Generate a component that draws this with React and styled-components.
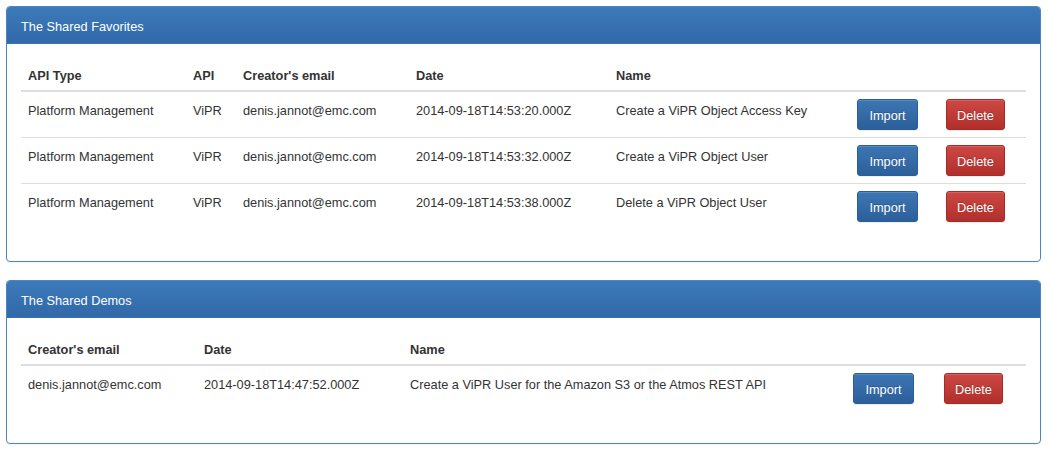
import React from "react";
import styled, { createGlobalStyle } from "styled-components";

const Global = createGlobalStyle`
  html, body { margin: 0; padding: 0; background: #fff; }
  body {
    font-family: "Liberation Sans", Arial, Helvetica, sans-serif;
    font-size: 12.75px;
    color: #333;
  }
`;

const Page = styled.div`
  padding: 6px 9px 6px 6px;
  display: flex;
  flex-direction: column;
  gap: 18px;
`;

const Panel = styled.section`
  border: 1px solid #4a86c4;
  border-radius: 4px;
  background: #fff;
  box-shadow: 0 1px 2px rgba(0, 0, 0, 0.05);
  overflow: hidden;
`;

const PanelHeading = styled.div`
  height: 38px;
  box-sizing: border-box;
  display: flex;
  align-items: center;
  padding: 3px 14px 0;
  color: #fff;
  font-size: 12.75px;
  background: linear-gradient(to bottom, #3d7bbb 0%, #3168a8 100%);
  border-bottom: 1px solid #3a72b0;
  margin-top: -1px;
  margin-left: -1px;
  margin-right: -1px;
  border-left: 1px solid #3a76b6;
  border-right: 1px solid #3a76b6;
`;

const PanelBody = styled.div`
  padding: 14px;
`;

const Table = styled.table`
  width: 100%;
  table-layout: fixed;
  border-collapse: collapse;
  margin-bottom: 18px;
`;

const Col = styled.col`
  width: ${(p) => p.$w}px;
`;

const Th = styled.th`
  text-align: left;
  font-weight: bold;
  padding: 9px 7px 5px;
  line-height: 18px;
  border-bottom: 2px solid #dddddd;
  white-space: nowrap;
`;

const Td = styled.td`
  padding: 9px 7px 5px;
  line-height: 20px;
  vertical-align: top;
  border-top: 1px solid #dddddd;
  white-space: nowrap;
`;

const ButtonCell = styled(Td)`
  padding: 7px 7px 7px;
`;

const Button = styled.button`
  display: block;
  height: 31px;
  padding: 2px 10px 0;
  font-family: inherit;
  font-size: 12.75px;
  color: #fff;
  border-radius: 3px;
  border: 1px solid ${(p) => (p.$variant === "danger" ? "#a52b28" : "#285f96")};
  background: ${(p) =>
    p.$variant === "danger"
      ? "linear-gradient(to bottom, #cd4844 0%, #b12f2b 100%)"
      : "linear-gradient(to bottom, #3c76b4 0%, #2c5f9a 100%)"};
  text-shadow: 0 -1px 0 rgba(0, 0, 0, 0.2);
  box-shadow: inset 0 1px 0 rgba(255, 255, 255, 0.15), 0 1px 1px rgba(0, 0, 0, 0.075);
  width: ${(p) => p.$w}px;
  cursor: pointer;
`;

const favorites = [
  ["Platform Management", "ViPR", "denis.jannot@emc.com", "2014-09-18T14:53:20.000Z", "Create a ViPR Object Access Key"],
  ["Platform Management", "ViPR", "denis.jannot@emc.com", "2014-09-18T14:53:32.000Z", "Create a ViPR Object User"],
  ["Platform Management", "ViPR", "denis.jannot@emc.com", "2014-09-18T14:53:38.000Z", "Delete a ViPR Object User"],
];

const demos = [
  ["denis.jannot@emc.com", "2014-09-18T14:47:52.000Z", "Create a ViPR User for the Amazon S3 or the Atmos REST API"],
];

function DataPanel({ title, headers, widths, rows }) {
  return (
    <Panel>
      <PanelHeading>{title}</PanelHeading>
      <PanelBody>
        <Table>
          <colgroup>
            {widths.map((w, i) => (
              <Col key={i} $w={w} />
            ))}
          </colgroup>
          <thead>
            <tr>
              {headers.map((h, i) => (
                <Th key={i}>{h}</Th>
              ))}
              <Th />
              <Th />
            </tr>
          </thead>
          <tbody>
            {rows.map((r, i) => (
              <tr key={i}>
                {r.map((c, j) => (
                  <Td key={j}>{c}</Td>
                ))}
                <ButtonCell>
                  <Button $w={61}>Import</Button>
                </ButtonCell>
                <ButtonCell>
                  <Button $variant="danger" $w={59}>Delete</Button>
                </ButtonCell>
              </tr>
            ))}
          </tbody>
        </Table>
      </PanelBody>
    </Panel>
  );
}

export default function App() {
  return (
    <>
      <Global />
      <Page>
        <DataPanel
          title="The Shared Favorites"
          headers={["API Type", "API", "Creator's email", "Date", "Name"]}
          widths={[165, 50, 173, 200, 241, 89, 87]}
          rows={favorites}
        />
        <DataPanel
          title="The Shared Demos"
          headers={["Creator's email", "Date", "Name"]}
          widths={[176, 206, 443, 91, 89]}
          rows={demos}
        />
      </Page>
    </>
  );
}
